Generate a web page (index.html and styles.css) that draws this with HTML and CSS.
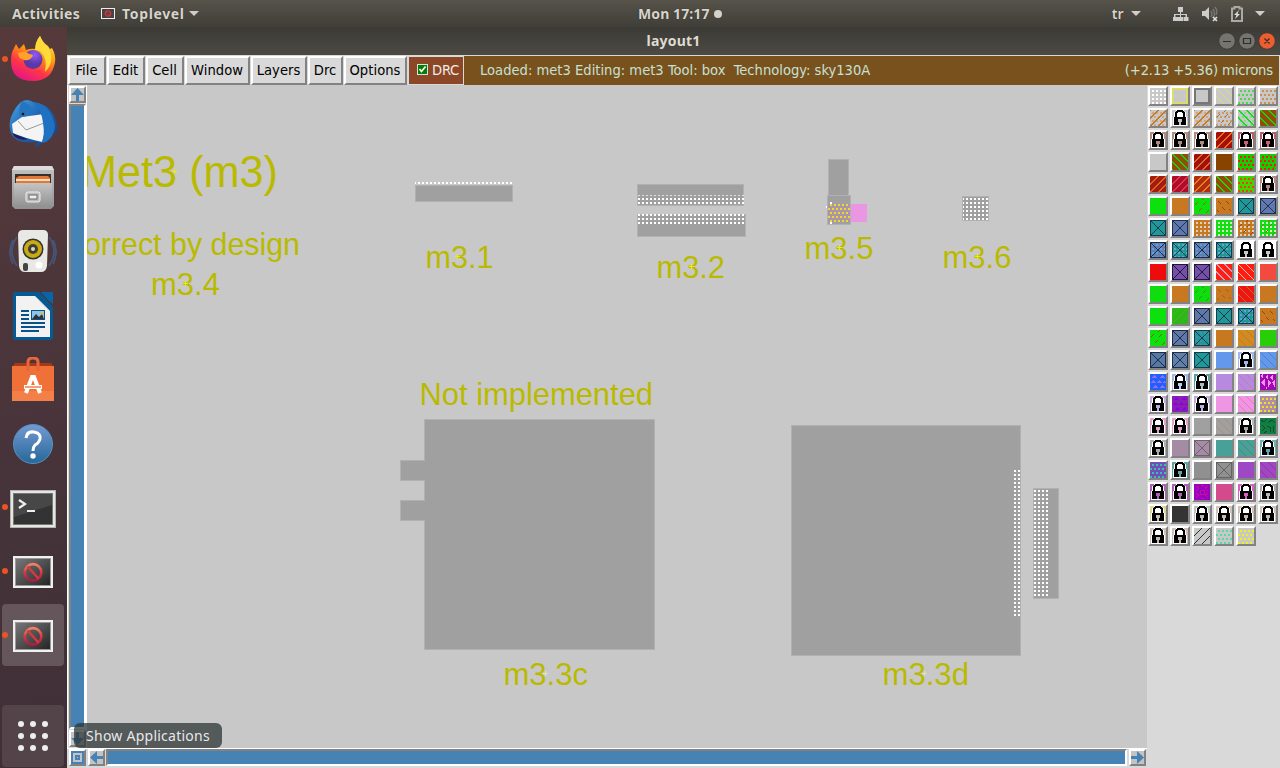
FILE: index.html
```html
<!DOCTYPE html>
<html lang="en">
<head>
<meta charset="utf-8">
<title>layout1</title>
<link rel="stylesheet" href="styles.css">
</head>
<body>
<div class="desktop">
  <header class="topbar">
    <div class="tb-left">
      <span class="activities">Activities</span>
      <svg class="app-ico" width="14" height="12" viewBox="0 0 14 12"><rect x=".5" y=".5" width="13" height="10" fill="#444" stroke="#eee"/><circle cx="7" cy="5.500" r="2.700" fill="none" stroke="#d8323a" stroke-width="1.300"/><path d="M5.300 3.800l3.400 3.400" stroke="#d8323a"/></svg>
      <span class="toplevel">Toplevel</span><i class="caret"></i>
    </div>
    <div class="clock"><span>Mon 17:17</span><i class="dot"></i></div>
    <div class="tb-right">
      <span class="lang">tr</span><i class="caret"></i>
      <svg class="net" width="16" height="16" viewBox="0 0 16 16" fill="#ccc"><path d="M5 1h5v5H8v2h6v3h1.500v4h-5v-4h2V9H8v2h2v4H5v-4h2V9H2.500v2H5v4H0v-4h1V8h6V6H5z"/></svg>
      <svg class="vol" width="18" height="16" viewBox="0 0 18 16"><path d="M1 5h3l4-4v13l-4-4H1z" fill="#ccc"/><path d="M10 5q2 3 0 6M12 3q3 5 0 9M14 1q3 4 1 8" fill="none" stroke="#77756e" stroke-width="1.500"/><path d="M12 11l4 4m0-4l-4 4" stroke="#ddd" stroke-width="1.700"/></svg>
      <svg class="bat" width="12" height="16" viewBox="0 0 12 16"><path d="M1 2.500h2.500V1h5v1.500H11V15H1z" fill="none" stroke="#aaa9a3" stroke-width="2"/><path d="M8 4L3 9h2.500L4 13l5-5H6.500z" fill="#ddd"/></svg>
      <i class="caret"></i>
    </div>
  </header>

  <nav class="dock">
    <div class="item run first"><svg width="46" height="48" viewBox="0 0 46 48">
      <defs><linearGradient id="ff" x1=".8" y1="0" x2=".3" y2="1"><stop offset="0" stop-color="#fff44f"/><stop offset=".4" stop-color="#ff980e"/><stop offset=".7" stop-color="#ff3647"/><stop offset="1" stop-color="#e31587"/></linearGradient><radialGradient id="fg" cx=".6" cy=".25"><stop offset="0" stop-color="#9059ff"/><stop offset="1" stop-color="#5b38a8"/></radialGradient></defs>
      <path d="M3 15l3-6 3 5 5-5 2 6q5-2 10-1-1-7 4-13 3 7 8 10l2 3 2-1q4 7 3 14-3 19-22 19Q1 46 1 26q0-7 2-11z" fill="url(#ff)"/><circle cx="23" cy="24.500" r="9.500" fill="url(#fg)"/><path d="M8 18q8-3 11 1 4 0 4 2-2 3-5 4-4 1-6-1-3 0-4-6z" fill="#ffa02c"/><path d="M25 15q0-8 5-14 3 8 8 11 8 14-3 25 3-14-5-21-2-1-5-1z" fill="#ffda3b"/></svg></div>
    <div class="item"><svg width="50" height="50" viewBox="0 0 50 50">
      <defs><linearGradient id="tb" x1="0" y1="0" x2="1" y2="1"><stop offset="0" stop-color="#46a7e6"/><stop offset=".45" stop-color="#1f65b5"/><stop offset="1" stop-color="#143c82"/></linearGradient></defs>
      <path d="M13 3q6-4 12 0 13 1 20 12 6 10 3 21l-3-2q-1 6-7 9l-2-1q-4 5-9 6l2-5Q4 46 2 30q-1-6 1-12 4-10 10-15z" fill="url(#tb)"/><path d="M4 25L14 18 36 15q4 8-2 28Q16 39 5 34z" fill="#f4f4f4"/><path d="M10 22l8 9 18-7" fill="none" stroke="#999"/><path d="M4 34q10 4 16 6-7 2-13-2z" fill="#241a55"/><path d="M14 2q8 3 12 10-5 6-14 6-2-9 2-16z" fill="#2674bd"/><path d="M24 3q19 2 23 24-1 11-9 16l-4 1q3-8 1-20-1-13-11-21z" fill="#2071c2"/><circle cx="15" cy="15" r="1.300" fill="#111"/></svg></div>
    <div class="item"><svg width="44" height="46" viewBox="0 0 44 46">
      <defs><linearGradient id="fc" x1="0" y1="0" x2="0" y2="1"><stop offset="0" stop-color="#c4c4c4"/><stop offset="1" stop-color="#919191"/></linearGradient></defs>
      <path d="M3 1h38l2 4v36l-3 3H4l-3-3V5z" fill="url(#fc)"/><path d="M3 1h38l2 4H1z" fill="#dcdcdc"/><path d="M4 9h36v10H4z" fill="#3a302a"/><path d="M5 13l3-2h29l2 2v6H5z" fill="#e87830"/><path d="M5 15h34" stroke="#fff" stroke-width="1.500"/><path d="M3 18h38v24H3z" fill="url(#fc)"/><rect x="15" y="27" width="14" height="10" rx="2" fill="#bbb" stroke="#eee"/><rect x="18" y="30" width="8" height="4" fill="#eee" stroke="#666"/></svg></div>
    <div class="item"><svg width="50" height="48" viewBox="0 0 50 48"><g fill="none" stroke="#475375" stroke-width="1.800"><path d="M9 9Q-1 23 9 38M41 9q10 14 0 29M5 12q-6 11 0 24M45 12q6 11 0 24"/></g><path d="M10 7q0-5 5-5h20q5 0 5 5l-1 31q-1 6-6 6H17q-5 0-6-6z" fill="#e8e8e5"/><circle cx="25" cy="21" r="10.500" fill="#333"/><circle cx="25" cy="21" r="9" fill="#c8aa17"/><circle cx="25" cy="21" r="5" fill="#42402e"/><circle cx="25" cy="21" r="2" fill="#d8d8d0"/><circle cx="31" cy="37" r="3.500" fill="#fff"/><rect x="15" y="35" width="5" height="8" rx="2" fill="#444"/></svg></div>
    <div class="item"><svg width="40" height="48" viewBox="0 0 40 48"><path d="M2 0h24l14 15v31q0 2-2 2H2q-2 0-2-2V2q0-2 2-2z" fill="#065a93"/><path d="M28 0h12v12q-5-3-12-12z" fill="#0765a8"/><path d="M3 4h19l15 15v26H3z" fill="#f2f2f2"/><path d="M22 4l15 15q-7-5-15-15z" fill="#ccc"/><path d="M8 19h8M8 23h8M8 27h8M8 31h24M8 35h24M8 39h18" stroke="#07538a" stroke-width="2"/><rect x="18.500" y="18.500" width="13" height="9" fill="#8bc6ed" stroke="#07538a"/><path d="M19 27l4-5 3 3 3-3 2 5z" fill="#333"/><circle cx="29" cy="21" r="1.500" fill="#e5bd33"/></svg></div>
    <div class="item"><svg width="42" height="46" viewBox="0 0 42 46"><path d="M1 9l2-3h36l2 3z" fill="#a73818"/><path d="M0 9h42v35H0z" fill="#ef7137"/><path d="M0 34h42v10H0z" fill="#f38048"/><path d="M16 14V5q0-4 5-4t5 4v9" fill="none" stroke="#e9653a" stroke-width="3"/><path d="M14 36l6-16h2l6 16M12 30h18" fill="none" stroke="#fff" stroke-width="4"/><path d="M13 30h16" stroke="#f06c29" stroke-width="1.300"/></svg></div>
    <div class="item"><svg width="42" height="42" viewBox="0 0 42 42"><defs><linearGradient id="he" x1="0" y1="0" x2="0" y2="1"><stop stop-color="#729bd3"/><stop offset="1" stop-color="#286798"/></linearGradient></defs><circle cx="21" cy="21" r="19.500" fill="url(#he)" stroke="#5591bf"/><path d="M14 15q1-7 8-6 7 1 6 7-1 4-5 6-2 2-2 6" fill="none" stroke="#fff" stroke-width="3"/><circle cx="21" cy="33" r="2.700" fill="#fff"/></svg></div>
    <div class="item run term"><svg width="46" height="38" viewBox="0 0 46 38"><rect x=".5" y=".5" width="45" height="37" fill="#e5e5e3" stroke="#b5b5b0"/><rect x="3.500" y="3.500" width="39" height="31" fill="#333" stroke="#777"/><path d="M4 4h38v11L4 27z" fill="#474747"/><path d="M9 10l6 4-6 4M17 21h8" fill="none" stroke="#eee" stroke-width="2.200"/></svg></div>
    <div class="item run"><svg width="40" height="32" viewBox="0 0 40 32"><defs><linearGradient id="mg" x1="0" y1="0" x2="1" y2="1"><stop stop-color="#777"/><stop offset="1" stop-color="#262626"/></linearGradient><linearGradient id="no" x1="0" y1="0" x2="0" y2="1"><stop stop-color="#f0836a"/><stop offset=".5" stop-color="#d93840"/><stop offset="1" stop-color="#a81b45"/></linearGradient></defs><g id="mw"><path d="M0 0h40v32H0z" fill="#f0f0ee"/><path d="M2 2h36v28H2z" fill="#999"/><path d="M3 3h34v26H3z" fill="url(#mg)"/><circle cx="20" cy="16.500" r="8.300" fill="none" stroke="url(#no)" stroke-width="2.700"/><path d="M14.500 10.500l11 12" stroke="#d93840" stroke-width="2.500"/></g></svg></div>
    <div class="item run active"><svg width="40" height="32" viewBox="0 0 40 32"><use href="#mw"/></svg></div>
    <div class="apps"><i></i><i></i><i></i><i></i><i></i><i></i><i></i><i></i><i></i></div>
  </nav>

  <main class="window">
    <div class="titlebar"><span class="title">layout1</span>
      <div class="wbtns"><svg width="56" height="18" viewBox="0 0 56 18" fill="none"><circle cx="8" cy="9" r="8.200" fill="#75746e" stroke="#34342f" stroke-width=".7"/><circle cx="28" cy="9" r="8.200" fill="#75746e" stroke="#34342f" stroke-width=".7"/><circle cx="48" cy="9" r="8.200" fill="#ee5d30" stroke="#34342f" stroke-width=".7"/><path d="M4 9.500h8M24.500 6.500h7v5h-7zM45.500 6.500l5 5m0-5l-5 5" stroke="#2f2e2a" stroke-width="1.200"/></svg></div>
    </div>
    <div class="menubar">
      <button class="m file">File</button><button class="m edit">Edit</button><button class="m cell">Cell</button><button class="m win">Window</button><button class="m lay">Layers</button><button class="m drc">Drc</button><button class="m opt">Options</button>
      <div class="check"><svg width="11" height="11" viewBox="0 0 11 11"><path d="M0 0h11v11H0z" fill="#ddd"/><path d="M1 1h9v9H1z" fill="#008000"/><path d="M2.500 5l2 2.500 4-5" fill="none" stroke="#fff" stroke-width="1.700"/></svg><span>DRC</span></div>
      <div class="status"><span class="loaded">Loaded: met3 Editing: met3 Tool: box&nbsp; Technology: sky130A</span><span class="coords">(+2.13 +5.36) microns</span></div>
    </div>
    <div class="work">
      <div class="vscroll">
        <div class="sb"><svg width="13" height="13" viewBox="0 0 13 13"><path d="M6.500 0L13 7H8v6H5V7H0z" fill="#4682b4"/></svg></div>
        <div class="vtrack"></div>
        <div class="sb"><svg width="13" height="13" viewBox="0 0 13 13"><path d="M6.500 13L13 6H8V0H5v6H0z" fill="#4682b4"/></svg></div>
      </div>
      <svg class="canvas" width="1060" height="663" viewBox="87 85 1060 663">
        <defs>
          <pattern id="wd" width="4" height="4" patternUnits="userSpaceOnUse" x="418" y="182"><path d="M0 0h2v2H0z" fill="#fff"/></pattern>
          <pattern id="w2" width="4" height="4" patternUnits="userSpaceOnUse" x="638" y="198"><path d="M0 0h2v2H0z" fill="#fff"/></pattern>
          <pattern id="w3" width="4" height="4" patternUnits="userSpaceOnUse" x="1014" y="470"><path d="M0 0h2v2H0z" fill="#fff"/></pattern>
          <pattern id="yd" width="8" height="8" patternUnits="userSpaceOnUse" x="828" y="204"><path d="M2 0h2v2H2zM6 0h2v2H6zM0 4h2v2H0zM4 4h2v2H4z" fill="#e8dc34"/></pattern>
        </defs>
        <g fill="#a0a0a0" stroke="#b1b1b1" shape-rendering="crispEdges">
          <rect x="415.500" y="185.500" width="97" height="16"/>
          <rect x="637.500" y="184.500" width="106" height="21"/><rect x="637.500" y="214.500" width="108" height="22"/>
          <rect x="828.500" y="159.500" width="20" height="36"/>
          <path d="M850 204h17v18h-17z" fill="#ea96e2" stroke="none"/>
          <rect x="827.500" y="195.500" width="23" height="29"/>
          <rect x="962.500" y="196.500" width="26" height="24"/>
          <path d="M424.500 419.500h230v230h-230V520.500h-24v-20h24v-20h-24v-20h24z"/>
          <rect x="791.500" y="425.500" width="229" height="230"/>
          <rect x="1033.500" y="488.500" width="25" height="110"/>
        </g>
        <g shape-rendering="crispEdges">
          <rect x="415" y="182" width="97" height="2" fill="url(#wd)"/>
          <rect x="638" y="195" width="106" height="1" fill="url(#w2)" opacity=".7"/><rect x="638" y="198" width="106" height="6" fill="url(#w2)"/>
          <rect x="638" y="214" width="107" height="10" fill="url(#w2)"/>
          <rect x="963" y="198" width="25" height="22" fill="url(#w2)"/>
          <rect x="1014" y="470" width="6" height="146" fill="url(#w3)"/>
          <rect x="1034" y="490" width="14" height="108" fill="url(#w3)"/>
          <path d="M828 204h22v18h-22z" fill="#b48cac" opacity=".6"/><path d="M828 204h22v18h-22z" fill="url(#yd)"/>
          <path d="M830 202h2v2h-2zM826 206h1v2h-1zM830 222h2v2h-2z" fill="#fff"/>
        </g>
        <g class="label">
          <text x="81" y="187" class="big" textLength="197" lengthAdjust="spacingAndGlyphs">Met3 (m3)</text>
          <text x="62" y="255" textLength="238" lengthAdjust="spacingAndGlyphs">Correct by design</text>
          <text x="151" y="295" textLength="69" lengthAdjust="spacingAndGlyphs">m3.4</text><text x="425.500" y="268" textLength="68" lengthAdjust="spacingAndGlyphs">m3.1</text>
          <text x="656.500" y="278" textLength="68.500" lengthAdjust="spacingAndGlyphs">m3.2</text><text x="804.500" y="259" textLength="69" lengthAdjust="spacingAndGlyphs">m3.5</text>
          <text x="942.500" y="268" textLength="69" lengthAdjust="spacingAndGlyphs">m3.6</text><text x="419.500" y="405" textLength="233.500" lengthAdjust="spacingAndGlyphs">Not implemented</text>
          <text x="503.500" y="685" textLength="84.500" lengthAdjust="spacingAndGlyphs">m3.3c</text><text x="882.500" y="685" textLength="86.500" lengthAdjust="spacingAndGlyphs">m3.3d</text>
        </g>
        <path d="M455 256.500h5M457.500 254v5M689 266.500h5M691.500 264v5M837 247.500h5M839.500 245v5M975 256.500h5M977.500 254v5M183 283.500h5M185.500 281v5M172 171.500h5M174.500 169v5" stroke="#eff000"/>
        <path d="M543 673.500h5M545.500 671v5M922 673.500h5M924.500 671v5" stroke="#e4e4b0"/>
      </svg>
    </div>
    <div class="palette" id="palette"></div>
    <div class="hscroll">
      <div class="sb"><svg width="13" height="13" viewBox="0 0 13 13" fill="none" stroke="#4682b4" stroke-width="2"><path d="M1 1h11v11H1zM5 5h3v3H5z"/></svg></div>
      <div class="sb"><svg width="13" height="13" viewBox="0 0 13 13"><path d="M0 6.500L7 0v5h6v3H7v5z" fill="#4682b4"/></svg></div>
      <div class="htrack"></div>
      <div class="sb"><svg width="13" height="13" viewBox="0 0 13 13"><path d="M13 6.500L6 0v5H0v3h6v5z" fill="#4682b4"/></svg></div>
    </div>
  </main>
  <div class="tooltip">Show Applications</div>
</div>
<script src="palette.js"></script>
</body>
</html>
```
FILE: styles.css
```css
* { box-sizing: border-box; }
body { margin: 0; overflow: hidden; font-family: "DejaVu Sans Condensed", "DejaVu Sans", sans-serif; }
svg { display: block; flex: none; }
.desktop { width: 1280px; height: 768px; display: grid; grid-template: 27px 741px / 67px 1213px; position: relative; }

.topbar { grid-column: 1 / 3; display: grid; grid-template-columns: 638px auto 1fr; background: linear-gradient(#57534a, #3f3e38); color: #d8d4cb; font: bold 14px/27px "Noto Sans", sans-serif; text-shadow: 0 0 1px #222; }
.tb-left, .tb-right, .clock { display: flex; align-items: center; }
.tb-left { padding-left: 12px; }
.activities { width: 68px; letter-spacing: .3px; white-space: nowrap; }
.app-ico { margin: 0 7px 0 21px; }
.toplevel { width: 63px; letter-spacing: .65px; }
.caret { border: 5px solid transparent; border-top-color: #d0cdc6; border-bottom: 0; margin-left: 4px; }
.clock { letter-spacing: .1px; white-space: nowrap; }
.dot { width: 8px; height: 8px; border-radius: 4px; background: #d5d2cb; margin-left: 4px; }
.tb-right { justify-content: flex-end; padding-right: 15px; }
.lang { letter-spacing: .3px; margin-right: 3px; font-weight: 600; }
.net { margin: 0 12px 0 32px; }
.vol { margin-right: 12px; }
.bat { margin-right: 8px; }

.dock { background: linear-gradient(165deg, #563a3b, #45333a 65%, #402f36); display: flex; flex-direction: column; }
.item { height: 64px; width: 66px; display: flex; align-items: center; justify-content: center; position: relative; padding-top: 2px; }
.first { padding-top: 0; }
.term { padding-top: 4px; }
.run::before { content: ""; position: absolute; left: 2px; top: 29px; width: 6px; height: 6px; border-radius: 3px; background: #e95420; }
.active { background: #65565b; height: 62px; width: 62px; margin: 1px 2px; border-radius: 4px; }
.active::before { left: 0; top: 28px; }
.apps { width: 62px; height: 62px; margin: 38px 0 0 2px; border-radius: 4px; background: #53444a; display: grid; grid-template-columns: repeat(3, 6px); grid-auto-rows: 6px; gap: 6px; place-content: center; }
.apps i { border-radius: 50%; background: #eee; }

.window { display: grid; grid-template: 28px 30px 663px 20px / 1080px 133px; background: #d9d9d9; }
.titlebar { grid-column: 1 / 3; background: linear-gradient(#3b3a35, #4c4a43); color: #dfdbd2; font: bold 14px/27px "Noto Sans", sans-serif; display: grid; grid-template-columns: 80px 1fr 80px; }
.title { grid-column: 2; text-align: center; letter-spacing: .2px; }
.wbtns { display: flex; justify-content: flex-end; align-items: center; padding-right: 5px; }
.menubar { grid-column: 1 / 3; display: flex; padding: 1px 1px 0 1px; font-size: 14.6px; }
.m { font: inherit; letter-spacing: .05px; color: #000; background: #d9d9d9; border: 2px solid; border-color: #fff #828282 #828282 #fff; margin: 0 1px 0 0; padding: 0 1px 2px 0; height: 29px; white-space: nowrap; flex: none; }
.file, .edit, .cell { width: 38px; }
.win { width: 65px; }
.lay { width: 56px; }
.drc { width: 35px; }
.opt { width: 63px; }
.check { width: 56px; height: 29px; border: 1px solid #d9d9d9; background: #8b4726; color: #f0ebe8; display: flex; align-items: center; gap: 4px; padding: 0 0 2px 8px; letter-spacing: -.2px; }
.status { flex: 1; height: 29px; background: #79511d; color: #c5e1d6; display: flex; align-items: center; justify-content: space-between; padding: 0 6px 2px 16px; white-space: nowrap; }
.coords { letter-spacing: -.13px; }
.work { display: flex; background: #c8c8c8; }
.vscroll { width: 20px; border-left: 1px solid #fff; background: #d9d9d9; display: flex; flex-direction: column; padding: 1px 0 1px 1px; border-right: 1px solid #fff; }
.sb { width: 17px; height: 17px; border: 2px solid; border-color: #fff #828282 #828282 #fff; background: #c3c3c3; flex: none; }
.vtrack { flex: 1; margin: 1px 0; border: 2px solid; border-color: #828282 #fff #fff #828282; background: #4682b4; width: 17px; }
.canvas { background: #c8c8c8; }
.label { font-family: "Liberation Sans", sans-serif; font-size: 31.5px; fill: #b9ba00; }
.big { font-size: 43.5px; }
.hscroll { display: flex; gap: 2px; padding: 0 1px 3px 2px; border-top: 1px solid #fff; }
.htrack { flex: 1; margin-left: -1px; border: 2px solid; border-color: #828282 #fff #fff #828282; background: #4682b4; height: 17px; }
.palette { grid-area: 3 / 2 / 5 / 3; display: grid; grid-template-columns: repeat(6, 20px); grid-auto-rows: 20px; gap: 2px; align-content: start; padding: 1px 0 0 1px; }
.swatch { border: 2px solid; border-color: #fff #828282 #828282 #fff; }
.tooltip { position: absolute; left: 74px; top: 723px; width: 148px; height: 25px; border-radius: 6px; background: rgba(46, 52, 54, .75); color: #e8e8e8; font: 14px/25px "Noto Sans", sans-serif; text-align: center; letter-spacing: .25px; }
```
FILE: palette.js
```javascript
// Each layer: background, then optional pattern:color pairs.
// d square dots, s staggered dots, b/f back and forward diagonals (capitals
// are heavier), e/g sparse diagonals, x crossed box, o outline, z zigzag,
// v vertical zigzag, m maze, r rings, L lock.
const rows = [
  "c8c8c8 d:fff|c8c8c8 o:dcdc6a|c8c8c8 o:777|c8c8c8 b:dede70|c8c8c8 s:4ad94f|c8c8c8 s:c89058",
  "c8c8c8 s:d0a880 F:c87820|c8c8c8 L:c8c8c8|c8c8c8 s:d0a880 F:c87820|c8c8c8 s:d09a68 e:b07040|c8c8c8 s:80dd80 B:10dc20|954a08 B:10d810",
  "b0907c L:b08c78|b0907c L:b08c78|b0907c L:b08c78|a80c0c F:d87818|b86068 L:c86070|b86068 L:c86070",
  "c8c8c8|954a08 B:10d810|a80c0c F:c87820|874400|12d000 s:f01818|12d000 s:f01818 e:a06000",
  "a51b10 F:d86820|b20a28 F:d04050|b52a10 F:d88a18|954a08 B:20d810|3cd800 s:f04010|b08c80 L:b08c80",
  "0de10d|c87820|0de10d e:a06000|c87820 g:904808|209898 x:143c50|6078b0 x:20304c",
  "209898 x:143c50|6078b0 x:20304c|c87820 d:d8d0c0|10e010 d:d8e8c8|c87820 d:d8d0c0 e:904808|10e010 d:d8e8c8 e:a06030",
  "607fae d:609be8 x:182c48|209898 d:60a8c8 x:143c50|607fae d:609be8 x:182c48|209898 d:60a8c8 x:143c50|fff L:c8c8c8|fff L:c8c8c8",
  "ed0b0b|7450a8 x:241440|7450a8 x:241440|ff1c10 B:c8a0b8|ff1c10 b:f0c0b0|f34a40",
  "10dd10|c87820|10dd10 e:20a010|c87820 g:a06020|ed1515 b:c87020|c87820",
  "0de10d|34b41c f:20d010|6078a8 x:1c2c48|209898 x:143c50|209898 d:60a0e0 x:143c50|c87820 g:984800",
  "0de10d e:a05000|6078a8 x:1c2c48|209898 d:4890b0 x:143c50|c87820|d08c20 b:c87820|28cf08",
  "5878a4 x:1c2c48|6080a8 x:20304c|209898 x:143c50|6498ec|a0b8e8 L:a0b8e8|6498ec b:5080c0",
  "2060ff z:8c70f0|a0b8e8 L:b8d0f8|58a0a0 L:a0c0c0|b78ae0|b78ae0 b:c878b0|a008b0 v:ee90f0",
  "c0a8d8 L:c0b0e0|8a20b0 z:8c00e8|c0a8d8 L:c0b0e0|ee95e3|ee95e3 b:e878b0|b08ea8 s:eee020",
  "e8a0c8 L:e0a0c8|e8a0c8 L:e0a0c8|a0a0a0|a0a0a0 b:b09070|b8b8b8 L:a8a8a8|108040 m:184838",
  "b0b0b0 L:a8a8a8|a48ca4|a48ca4 x:706070|48a098|48a098 b:508878|70b0b0 L:60a8a8",
  "7050b8 s:38c0a8|60a8a8 L:60a8a8|909090|909090 x:646464|9e48c6|9e48c6 b:a03090",
  "b060b8 L:b060b0|b060b8 L:b060b0|9c00c0 r:c010a0|d44a8c|d860c8 L:d860c8|a8a8a8 L:b8b8b8",
  "d8d890 L:c8c0b8|343434|c0c0c0 L:b8b8b8|d0c0b8 L:c8b8b0|d0c0b8 L:c8b8b0|d0c0b8 L:c8b8b0",
  "d0c0b8 L:c8b8b0|d0c0b8 L:c8b8b0|c8c8c8 f:303030|c8c8c8 s:58d8a8|c8c8c8 s:f0f020"
];

function draw(kind, c) {
  const stroke = (d, w = 1) => `<path d="${d}" fill="none" stroke="#${c}" stroke-width="${w}"/>`;
  const fill = d => `<path d="${d}" fill="#${c}"/>`;
  let d = "";
  if (kind === "d" || kind === "s") {
    for (let y = 2, r = 0; y < 16; y += 4, r++)
      for (let x = (kind === "s" && r % 2) ? 0 : 2; x < 16; x += 4) d += `M${x} ${y}h2v2h-2z`;
    return fill(d);
  }
  // Diagonals are laid pixel by pixel on an 8px repeat.
  if ("bBfF".includes(kind)) {
    const w = kind === "B" || kind === "F" ? 2 : 1;
    for (let y = 0; y < 16; y++)
      for (let x = 0; x < 16; x++) {
        const k = (kind.toLowerCase() === "b" ? x - y + 16 : x + y + 1) % 8;
        if (k < w) d += `M${x} ${y}h1v1h-1z`;
      }
    return fill(d);
  }
  if (kind === "e") return stroke("M1 7l3-3M9 7l3-3M5 13l3-3M12 15l3-3M8 2l2-2");
  if (kind === "g") return stroke("M2 3l3 3M10 3l3 3M6 9l3 3M1 12l2 2M13 11l2 2");
  if (kind === "o") return stroke("M1 1h14v14H1z", 1.6);
  if (kind === "x") return stroke("M.5.5h15v15H.5zM1 1L15 15M15 1L1 15");
  if (kind === "z") return fill("M2 4l2-3 3 3zM9 4l3-3 3 3zM0 9l3-3 3 3zM6 9l3-3 3 3zM12 9l3-3 1 3zM2 14l3-3 3 3zM9 14l3-3 3 3z");
  if (kind === "v") return fill("M3 0v5l-3-3zM1 8l4-3v8zM8 0v6l-3-3zM8 6l3 3-3 5zM13 0v7l-3-4zM12 8l3-2v8zM5 14l2-2v4z");
  if (kind === "m") return stroke("M1 2l3 2 3-3M8 5l4-3 3 3M2 7l3 3-3 3M7 8l4 2-1 4M13 8v5l2 2M4 15l3-2");
  if (kind === "r") return stroke("M2 2l3 2-3 3M14 2l-3 2 3 3M2 14l3-3-3-2M14 14l-3-3 3-2M6 6h4v4H6zM7 1h3M7 14h3");
  return `<path d="M1 16V7h1V2h2V0h8v2h2v5h1v9z" fill="#fff"/><path d="M5 0h6v1h1v1h1v6h-2V3h-1V2H6v1H5v5H3V2h1V1h1z" fill="#000"/><path d="M2 7h12v8H2z" fill="#000"/><path d="M6 9h4v3H9v3H7v-3H6z" fill="#${c}"/>`;
}

document.getElementById("palette").innerHTML = rows.flatMap(r => r.split("|")).map(item => {
  const [bg, ...marks] = item.split(" ");
  const art = marks.map(m => draw(...m.split(":"))).join("");
  return `<div class="swatch"><svg width="16" height="16" viewBox="0 0 16 16" shape-rendering="crispEdges"><rect width="16" height="16" fill="#${bg}"/>${art}</svg></div>`;
}).join("");
```
